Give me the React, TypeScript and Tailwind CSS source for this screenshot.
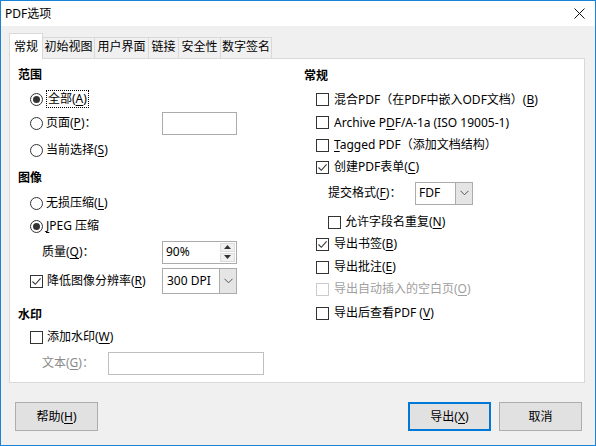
import * as React from "react";

// PDF export options dialog (Windows-style)

const FONT = "font-['Noto_Sans','Noto_Sans_CJK_SC',sans-serif]";

function U({ c }: { c: string }) {
  return <span className="underline underline-offset-[2px] decoration-1">{c}</span>;
}

function Check({ checked = false, disabled = false }: { checked?: boolean; disabled?: boolean }) {
  return (
    <span
      className={
        disabled
          ? "flex h-[13px] w-[13px] shrink-0 items-center justify-center border border-[#cccccc] bg-white"
          : "flex h-[13px] w-[13px] shrink-0 items-center justify-center border border-[#333333] bg-white"
      }
    >
      {checked && (
        <svg width="11" height="11" viewBox="0 0 11 11">
          <path d="M1.5 5.5 L4.3 8.3 L9.6 2.4" stroke="#333" strokeWidth="1.1" fill="none" />
        </svg>
      )}
    </span>
  );
}

function Radio({ checked = false }: { checked?: boolean }) {
  return (
    <span className="flex h-[13px] w-[13px] shrink-0 items-center justify-center rounded-full border border-[#333333] bg-white">
      {checked && <span className="h-[7px] w-[7px] rounded-full bg-[#333333]" />}
    </span>
  );
}

function Chevron() {
  return (
    <svg width="9" height="6" viewBox="0 0 9 6">
      <path d="M0.5 0.8 L4.5 4.8 L8.5 0.8" stroke="#555" strokeWidth="1" fill="none" />
    </svg>
  );
}

const TABS = [
  { label: "初始视图", w: "w-[52px]" },
  { label: "用户界面", w: "w-[54px]" },
  { label: "链接", w: "w-[30px]" },
  { label: "安全性", w: "w-[42px]" },
  { label: "数字签名", w: "w-[51px]" },
];

export default function App() {
  return (
    <div
      className={`${FONT} flex h-[446px] w-[596px] flex-col overflow-hidden border border-[#1883d7] bg-[#f0f0f0] text-[12px] leading-[16px] text-black`}
    >
      {/* title bar */}
      <div className="flex h-[25px] shrink-0 items-center justify-between bg-white pl-[4px] pr-[10px]">
        <span className="text-[12px]">PDF选项</span>
        <svg width="11" height="11" viewBox="0 0 11 11">
          <path d="M0.5 0.5 L10.5 10.5 M10.5 0.5 L0.5 10.5" stroke="#111" strokeWidth="1" />
        </svg>
      </div>

      {/* tabs */}
      <div className="ml-[8px] mt-[7px] flex items-end">
        <div className="relative z-10 -mb-px flex h-[26px] w-[34px] items-start justify-center border-x border-t border-[#d9d9d9] bg-white pt-[5px]">
          常规
        </div>
        {TABS.map((t) => (
          <div
            key={t.label}
            className={`${t.w} flex h-[21px] items-start justify-center border-r border-t border-[#d9d9d9] pt-[1px]`}
          >
            {t.label}
          </div>
        ))}
      </div>

      {/* panel */}
      <div className="ml-[8px] flex h-[325px] w-[576px] border border-[#d9d9d9] bg-white">
        {/* left column */}
        <div className="flex w-[294px] flex-col pt-[4px]">
          <div className="flex h-[24px] items-center pl-[8px] font-bold">范围</div>
          <div className="flex h-[24px] items-center gap-[3px] pl-[20px]">
            <Radio checked />
            <span className="border border-dotted border-black px-px">
              全部(<U c="A" />)
            </span>
          </div>
          <div className="flex h-[24px] items-center pl-[20px]">
            <div className="flex w-[132px] items-center gap-[3px]">
              <Radio />
              <span>
                页面(<U c="P" />)：
              </span>
            </div>
            <div className="h-[23px] w-[75px] border border-[#ababab] bg-white" />
          </div>
          <div className="flex h-[30px] items-center gap-[3px] pl-[20px]">
            <Radio />
            <span>
              当前选择(<U c="S" />)
            </span>
          </div>
          <div className="flex h-[26px] items-center pl-[8px] font-bold">图像</div>
          <div className="flex h-[24px] items-center gap-[3px] pl-[20px]">
            <Radio />
            <span>
              无损压缩(<U c="L" />)
            </span>
          </div>
          <div className="flex h-[22px] items-center gap-[3px] pl-[20px]">
            <Radio checked />
            <span>
              <U c="J" />
              PEG 压缩
            </span>
          </div>
          <div className="flex h-[30px] items-center pl-[32px]">
            <span className="w-[120px]">
              质量(<U c="Q" />)：
            </span>
            <div className="flex h-[23px] w-[75px] items-stretch border border-[#ababab] bg-white">
              <span className="flex flex-1 items-center pl-[3px]">90%</span>
              <div className="my-px mr-px flex w-[15px] flex-col gap-px">
                <div className="flex flex-1 items-center justify-center border border-[#dcdcdc] bg-[#f0f0f0]">
                  <svg width="7" height="4" viewBox="0 0 7 4">
                    <path d="M3.5 0 L7 4 L0 4 Z" fill="#333" />
                  </svg>
                </div>
                <div className="flex flex-1 items-center justify-center border border-[#dcdcdc] bg-[#f0f0f0]">
                  <svg width="7" height="4" viewBox="0 0 7 4">
                    <path d="M0 0 L7 0 L3.5 4 Z" fill="#333" />
                  </svg>
                </div>
              </div>
            </div>
          </div>
          <div className="flex h-[28px] items-center pl-[20px]">
            <div className="flex w-[132px] items-center gap-[4px]">
              <Check checked />
              <span>
                降低图像分辨率(<U c="R" />)
              </span>
            </div>
            <div className="flex h-[26px] w-[75px] items-stretch border border-[#ababab] bg-white">
              <span className="flex flex-1 items-center pl-[4px]">300 DPI</span>
              <div className="flex w-[17px] items-center justify-center border-l border-[#ababab] bg-[#e5e5e5]">
                <Chevron />
              </div>
            </div>
          </div>
          <div className="mt-[8px] flex h-[24px] items-center pl-[8px] font-bold">水印</div>
          <div className="flex h-[20px] items-center gap-[4px] pl-[20px]">
            <Check />
            <span>
              添加水印(<U c="W" />)
            </span>
          </div>
          <div className="flex h-[32px] items-center pl-[32px] text-[#8a8a8a]">
            <span className="w-[66px]">
              文本(<U c="G" />)：
            </span>
            <div className="h-[23px] w-[156px] border border-[#bfbfbf] bg-white" />
          </div>
        </div>

        {/* right column */}
        <div className="flex flex-1 flex-col pt-[5px]">
          <div className="flex h-[24px] items-center font-bold">常规</div>
          <div className="flex h-[23px] items-center gap-[5px] pl-[12px]">
            <Check />
            <span>
              混合PDF（在PDF中嵌入ODF文档）(<U c="B" />)
            </span>
          </div>
          <div className="flex h-[23px] items-center gap-[5px] pl-[12px]">
            <Check />
            <span>
              Archive P<U c="D" />F/A-1a (ISO 19005-1)
            </span>
          </div>
          <div className="flex h-[22px] items-center gap-[5px] pl-[12px]">
            <Check />
            <span>
              <U c="T" />
              agged PDF（添加文档结构）
            </span>
          </div>
          <div className="flex h-[22px] items-center gap-[5px] pl-[12px]">
            <Check checked />
            <span>
              创建PDF表单(<U c="C" />)
            </span>
          </div>
          <div className="flex h-[30px] items-center pl-[24px]">
            <span className="w-[87px]">
              提交格式(<U c="F" />)：
            </span>
            <div className="flex h-[23px] w-[58px] items-stretch border border-[#ababab] bg-white">
              <span className="flex flex-1 items-center pl-[3px]">FDF</span>
              <div className="flex w-[17px] items-center justify-center border-l border-[#ababab] bg-[#e5e5e5]">
                <Chevron />
              </div>
            </div>
          </div>
          <div className="flex h-[28px] items-center gap-[4px] pl-[24px]">
            <Check />
            <span>
              允许字段名重复(<U c="N" />)
            </span>
          </div>
          <div className="flex h-[16px] items-center gap-[5px] pl-[12px]">
            <Check checked />
            <span>
              导出书签(<U c="B" />)
            </span>
          </div>
          <div className="flex h-[30px] items-center gap-[5px] pl-[12px]">
            <Check />
            <span>
              导出批注(<U c="E" />)
            </span>
          </div>
          <div className="flex h-[14px] items-center gap-[5px] pl-[12px] text-[#a0a0a0]">
            <Check disabled />
            <span>
              导出自动插入的空白页(<U c="O" />)
            </span>
          </div>
          <div className="flex h-[34px] items-center gap-[5px] pl-[12px]">
            <Check />
            <span>
              导出后查看PDF (<U c="V" />)
            </span>
          </div>
        </div>
      </div>

      {/* buttons */}
      <div className="mt-[19px] flex items-center pl-[14px] pr-[13px]">
        <button className="flex h-[29px] w-[83px] items-center justify-center border border-[#adadad] bg-[#e1e1e1]">
          帮助(<U c="H" />)
        </button>
        <div className="flex-1" />
        <button className="flex h-[29px] w-[83px] items-center justify-center border-2 border-[#0078d7] bg-[#e1e1e1]">
          导出(<U c="X" />)
        </button>
        <button className="ml-[8px] flex h-[29px] w-[83px] items-center justify-center border border-[#adadad] bg-[#e1e1e1]">
          取消
        </button>
      </div>
    </div>
  );
}
